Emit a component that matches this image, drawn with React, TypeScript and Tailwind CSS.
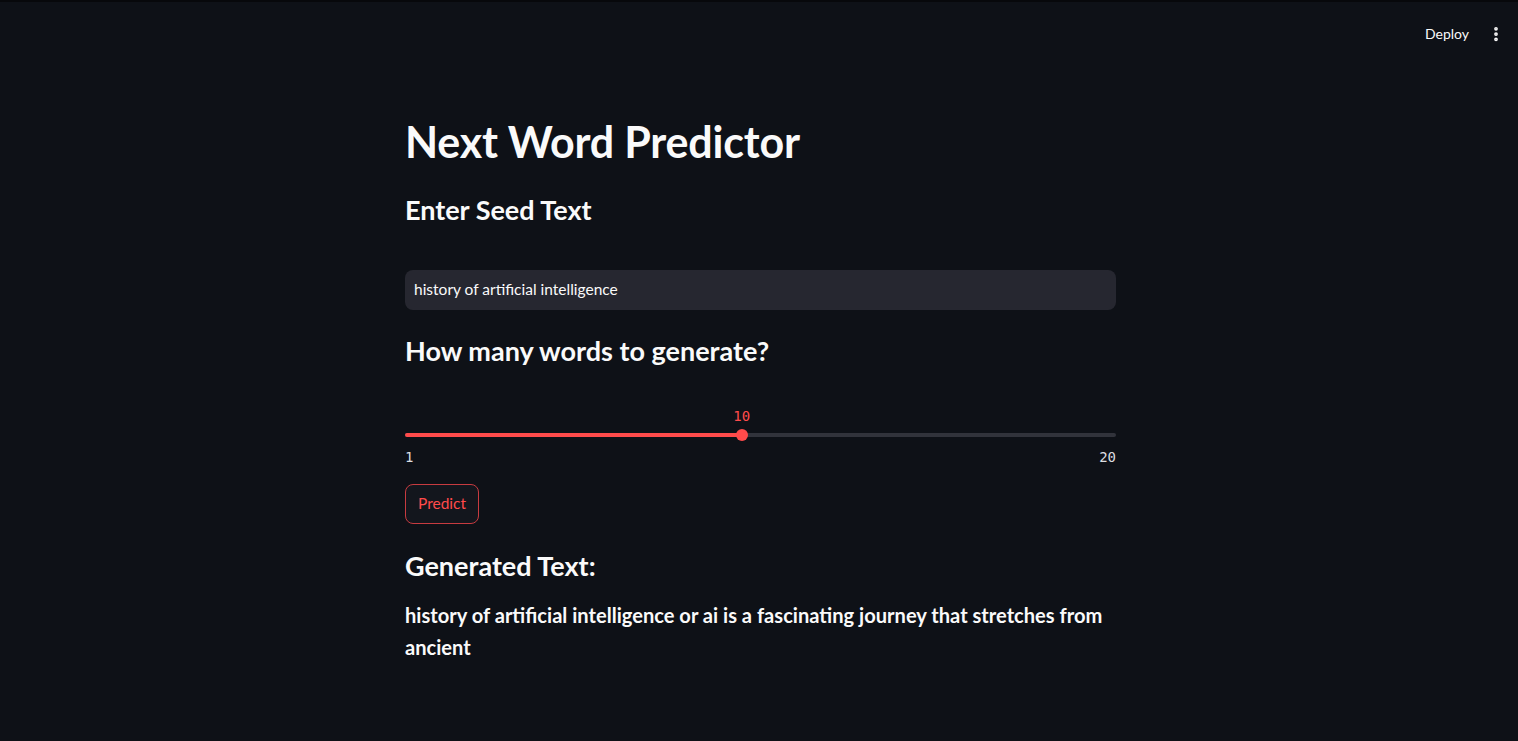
import { EllipsisVertical } from "lucide-react";

// slider data
const MIN = 1;
const MAX = 20;
const VALUE = 10;

const font = { fontFamily: "Lato, 'Noto Sans', sans-serif" };

const WordSlider = () => {
  const pct = ((VALUE - MIN) / (MAX - MIN)) * 100;

  return (
    <div className="mt-[37px] font-['DejaVu_Sans_Mono',monospace] text-[14px]">
      <div className="relative h-[23px]">
        <span
          className="absolute top-0 -translate-x-1/2 text-[#ff4b4b]"
          style={{ left: `${pct}%` }}
        >
          {VALUE}
        </span>
      </div>
      <div className="relative h-[12px] flex items-center">
        <div className="h-[4px] w-full rounded-full bg-[#31333b]" />
        <div
          className="absolute left-0 h-[4px] rounded-full bg-[#ff4b4b]"
          style={{ width: `${pct}%` }}
        />
        <div
          className="absolute h-[12px] w-[12px] -translate-x-1/2 rounded-full bg-[#ff4b4b]"
          style={{ left: `${pct}%` }}
        />
      </div>
      <div className="mt-[6px] flex justify-between text-[#dcdde0]">
        <span>{MIN}</span>
        <span>{MAX}</span>
      </div>
    </div>
  );
};

export default function App() {
  return (
    <div className="relative min-h-[741px] bg-[#0e1117] text-[#fafafa]" style={font}>
      <div className="h-[2px] bg-[#07080b]" />

      {/* header overlay */}
      <div className="absolute right-[13px] top-[23px] flex items-center gap-[18px]">
        <span className="text-[14px] text-[#fafafa]">Deploy</span>
        <EllipsisVertical size={18} strokeWidth={3} className="text-[#fafafa]" />
      </div>

      <div className="flex justify-center pl-[3px]">
        <div className="w-[711px] pt-[112px]">
          <h1 className="text-[43px] font-bold leading-[56px] tracking-[-0.2px]">Next Word Predictor</h1>

          <h3 className="mt-[22px] text-[27px] font-bold leading-[36px]">Enter Seed Text</h3>

          <div className="mt-[42px] flex h-[40px] items-center rounded-[8px] bg-[#262730] pl-[9px] text-[15.5px] text-[#fafafa]">
            history of artificial intelligence
          </div>

          <h3 className="mt-[23px] text-[27px] font-bold leading-[36px]">How many words to generate?</h3>

          <WordSlider />

          <button className="mt-[16px] h-[40px] w-[74px] rounded-[8px] border border-[#c73b40] bg-[#13161d] text-[15.5px] text-[#ff4b4b]">
            Predict
          </button>

          <h3 className="mt-[22px] text-[27px] font-bold leading-[40px]">Generated Text:</h3>

          <p className="mt-[13px] text-[20.1px] font-bold leading-[32px]">
            history of artificial intelligence or ai is a fascinating journey that stretches from ancient
          </p>
        </div>
      </div>
    </div>
  );
}
